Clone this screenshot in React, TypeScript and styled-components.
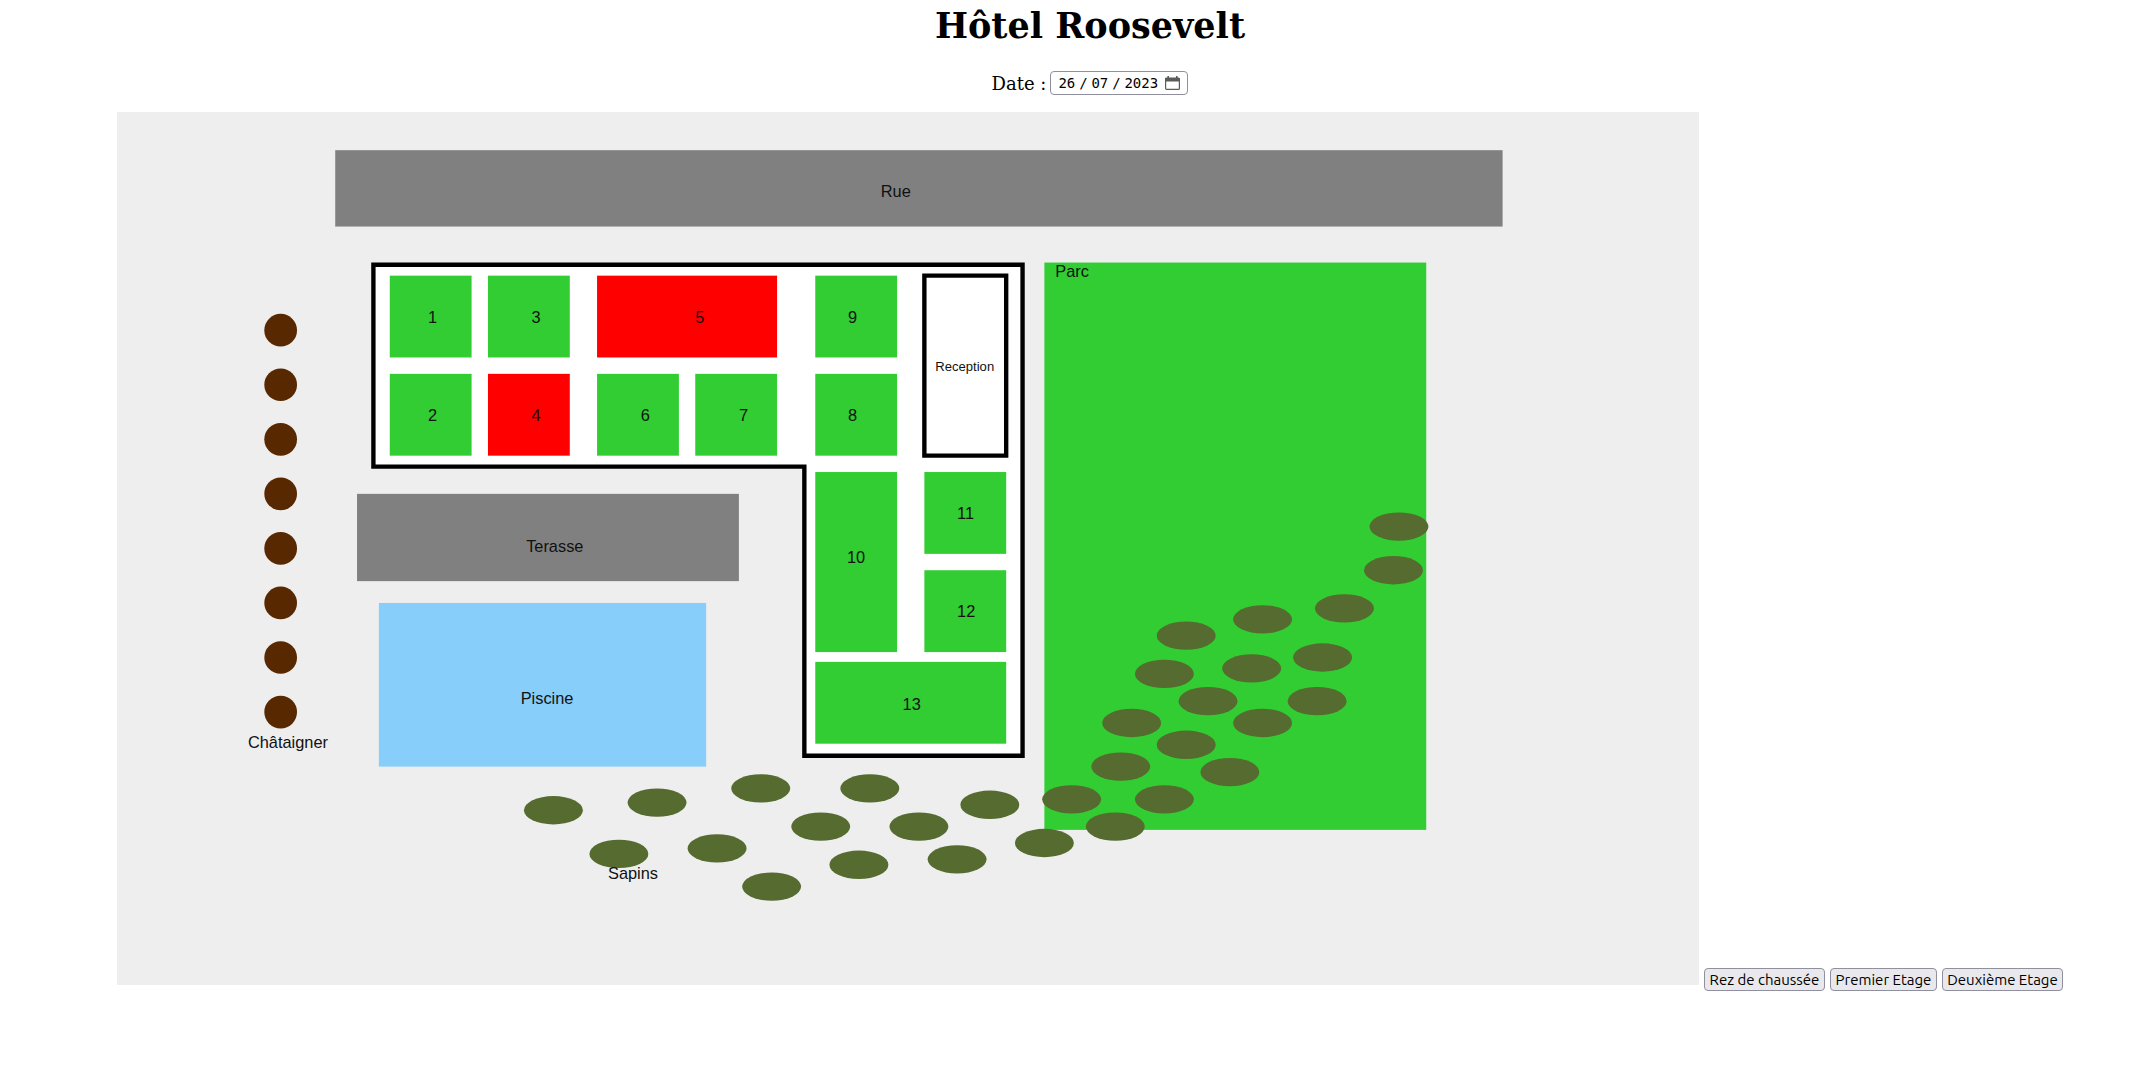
import React, { useState } from "react";
import styled, { createGlobalStyle } from "styled-components";

const GlobalStyle = createGlobalStyle`
  body {
    margin: 0;
    background: #ffffff;
    color: #000000;
    font: 18px/21px "DejaVu Serif", serif;
  }
`;

const Page = styled.main`
  display: flex;
  flex-direction: column;
  padding: 5px 66px 16px 117px;
`;

const Title = styled.h1`
  margin: 0 0 25px;
  font-size: 35px;
  line-height: 41px;
  text-align: center;
`;

const DateRow = styled.div`
  display: flex;
  justify-content: center;
  align-items: center;
  gap: 4px;
  margin-bottom: 17px;
`;

const DateField = styled.div`
  box-sizing: border-box;
  display: flex;
  align-items: center;
  height: 24px;
  padding: 0 7px;
  border: 1px solid #8f8f9d;
  border-radius: 4px;
  background: #ffffff;
  font: 14px/16px "DejaVu Sans Mono", monospace;
`;

const DatePart = styled.input<{ $wide?: boolean }>`
  width: ${(p) => (p.$wide ? 34 : 17)}px;
  padding: 0;
  border: 0;
  outline: 0;
  background: none;
  color: inherit;
  font: inherit;
`;

const Slash = styled.span`
  width: 16px;
  text-align: center;
`;

const CalendarButton = styled.button`
  display: flex;
  margin-left: 7px;
  padding: 0;
  border: 0;
  background: none;
`;

const Floor = styled.div`
  display: flex;
  align-items: baseline;
  gap: 5px;
`;

const Plan = styled.svg`
  flex: 1;
  min-width: 0;
  background: #eeeeee;
  fill: #111111;
  font: 15px "Liberation Sans", Arial, sans-serif;
`;

const SmallLabel = styled.text`
  font-size: 12px;
`;

const Wall = styled.path`
  fill: #ffffff;
  stroke: #000000;
  stroke-width: 4px;
`;

const FloorButtons = styled.nav`
  display: grid;
  grid-template-columns: 121px 107px 121px;
  gap: 5px;
`;

const FloorButton = styled.button`
  height: 23px;
  padding: 0;
  border: 1px solid #8f8f9d;
  border-radius: 4px;
  background: #e9e9ed;
  color: #000000;
  font: 15px/19px "Ubuntu", "Noto Sans", sans-serif;
  white-space: nowrap;
`;

type Room = {
  id: number;
  x: number;
  y: number;
  w?: number;
  h?: number;
  tx: number;
  ty: number;
  taken?: boolean;
};

const rooms: Room[] = [
  { id: 1, x: 250, y: 150, tx: 285, ty: 193 },
  { id: 2, x: 250, y: 240, tx: 285, ty: 283 },
  { id: 3, x: 340, y: 150, tx: 380, ty: 193 },
  { id: 4, x: 340, y: 240, tx: 380, ty: 283, taken: true },
  { id: 5, x: 440, y: 150, w: 165, tx: 530, ty: 193, taken: true },
  { id: 6, x: 440, y: 240, tx: 480, ty: 283 },
  { id: 7, x: 530, y: 240, tx: 570, ty: 283 },
  { id: 8, x: 640, y: 240, tx: 670, ty: 283 },
  { id: 9, x: 640, y: 150, tx: 670, ty: 193 },
  { id: 10, x: 640, y: 330, h: 165, tx: 669, ty: 413 },
  { id: 11, x: 740, y: 330, tx: 770, ty: 373 },
  { id: 12, x: 740, y: 420, tx: 770, ty: 463 },
  { id: 13, x: 640, y: 504, w: 175, tx: 720, ty: 548 },
];

const chestnuts = [200, 250, 300, 350, 400, 450, 500, 550];

const firs = [
  [400, 640], [495, 633], [590, 620], [460, 680], [550, 675], [600, 710],
  [645, 655], [690, 620], [735, 655], [800, 635], [680, 690], [770, 685],
  [850, 670], [875, 630], [915, 655], [960, 630], [920, 600], [1020, 605],
  [980, 580], [930, 560], [1050, 560], [1000, 540], [1100, 540], [960, 515],
  [1040, 510], [1105, 500], [980, 480], [1050, 465], [1125, 455], [1170, 420],
  [1175, 380],
];

const floors = ["Rez de chaussée", "Premier Etage", "Deuxième Etage"];

function DatePicker() {
  const [day, setDay] = useState("26");
  const [month, setMonth] = useState("07");
  const [year, setYear] = useState("2023");
  return (
    <DateRow>
      <label htmlFor="day">Date :</label>
      <DateField>
        <DatePart id="day" maxLength={2} value={day} onChange={(e) => setDay(e.target.value)} />
        <Slash>/</Slash>
        <DatePart aria-label="Mois" maxLength={2} value={month} onChange={(e) => setMonth(e.target.value)} />
        <Slash>/</Slash>
        <DatePart aria-label="Année" $wide maxLength={4} value={year} onChange={(e) => setYear(e.target.value)} />
        <CalendarButton type="button" aria-label="Calendrier">
          <svg width="15" height="14" viewBox="0 0 15 14">
            <rect x="0.6" y="2" width="13.8" height="11.4" rx="1" fill="none" stroke="#5b5b5b" strokeWidth="1.2" />
            <path d="M0 2h15v3.4H0zM2.4 0h1.6v3H2.4zM11 0h1.6v3H11z" fill="#5b5b5b" />
          </svg>
        </CalendarButton>
      </DateField>
    </DateRow>
  );
}

function HotelPlan() {
  return (
    <Plan viewBox="0 0 1450 800" role="img" aria-label="Plan">
      <rect x="200" y="35" width="1070" height="70" fill="#808080" />
      <text x="700" y="78">Rue</text>

      <Wall d="M235 140H830V590H630V325H235Z" />
      {rooms.map((r) => (
        <g key={r.id}>
          <rect x={r.x} y={r.y} width={r.w ?? 75} height={r.h ?? 75} fill={r.taken ? "#ff0000" : "#32cd32"} />
          <text x={r.tx} y={r.ty}>{r.id}</text>
        </g>
      ))}
      <Wall d="M740 150H815V315H740Z" />
      <SmallLabel x="750" y="237">Reception</SmallLabel>

      <rect x="220" y="350" width="350" height="80" fill="#808080" />
      <text x="375" y="403">Terasse</text>
      <rect x="240" y="450" width="300" height="150" fill="#87cefa" />
      <text x="370" y="543">Piscine</text>
      <rect x="850" y="138" width="350" height="520" fill="#32cd32" />
      <text x="860" y="151">Parc</text>

      {chestnuts.map((cy) => (
        <circle key={cy} cx="150" cy={cy} r="15" fill="#582900" />
      ))}
      <text x="120" y="583">Châtaigner</text>
      {firs.map(([cx, cy]) => (
        <ellipse key={`${cx}-${cy}`} cx={cx} cy={cy} rx="27" ry="13" fill="#556b2f" />
      ))}
      <text x="450" y="703">Sapins</text>
    </Plan>
  );
}

export default function App() {
  return (
    <>
      <GlobalStyle />
      <Page>
        <Title>Hôtel Roosevelt</Title>
        <DatePicker />
        <Floor>
          <HotelPlan />
          <FloorButtons>
            {floors.map((name) => (
              <FloorButton key={name} type="button">{name}</FloorButton>
            ))}
          </FloorButtons>
        </Floor>
      </Page>
    </>
  );
}
